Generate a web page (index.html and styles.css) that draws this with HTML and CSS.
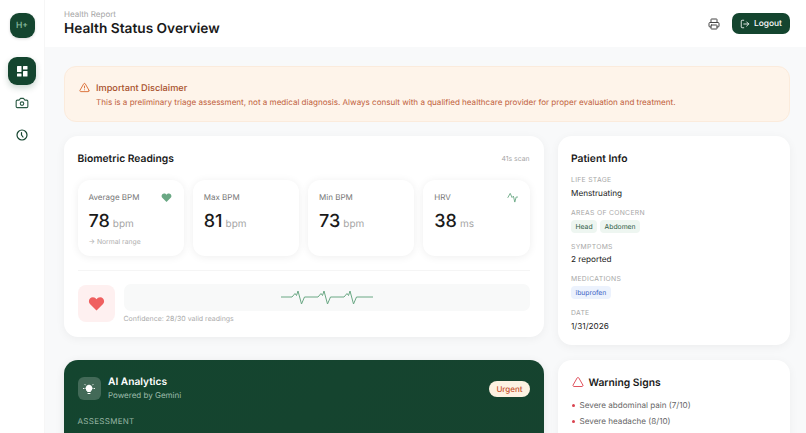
FILE: index.html
```html
<!DOCTYPE html>
<html lang="en">
<head>
<meta charset="utf-8">
<title>Health Status Overview</title>
<link rel="stylesheet" href="styles.css">
</head>
<body>
<div class="app">
  <aside class="sidebar">
    <div class="logo">H+</div>
    <nav class="nav">
      <a class="nav-item active">
        <svg width="12" height="12" viewBox="0 0 24 24" fill="#fff"><rect x="2" y="2" width="9" height="12" rx="1"/><rect x="14" y="2" width="9" height="7" rx="1"/><rect x="14" y="12" width="9" height="11" rx="1"/><rect x="2" y="17" width="9" height="6" rx="1"/></svg>
      </a>
      <a class="nav-item">
        <svg width="14" height="14" viewBox="0 0 24 24" fill="none" stroke="#2a5a44" stroke-width="1.900" stroke-linecap="round" stroke-linejoin="round"><path d="M14.500 4h-5L7 7H4a2 2 0 0 0-2 2v9a2 2 0 0 0 2 2h16a2 2 0 0 0 2-2V9a2 2 0 0 0-2-2h-3z"/><circle cx="12" cy="13" r="3"/></svg>
      </a>
      <a class="nav-item">
        <svg width="12" height="12" viewBox="0 0 24 24" fill="none" stroke="#14452f" stroke-width="2.400" stroke-linecap="round" stroke-linejoin="round"><circle cx="12" cy="12" r="10"/><path d="M11 7v5l3 4"/></svg>
      </a>
    </nav>
  </aside>
  <div class="main">
    <header class="topbar">
      <div>
        <div class="crumb">Health Report</div>
        <h1 class="page-title">Health Status Overview</h1>
      </div>
      <div class="actions">
        <svg class="print" width="12" height="12" viewBox="0 0 24 24" fill="none" stroke="#444" stroke-width="2" stroke-linecap="round" stroke-linejoin="round"><path d="M6 9V3a1 1 0 0 1 1-1h10a1 1 0 0 1 1 1v6"/><path d="M6 18H4a2 2 0 0 1-2-2v-5a2 2 0 0 1 2-2h16a2 2 0 0 1 2 2v5a2 2 0 0 1-2 2h-2"/><rect x="6" y="14" width="12" height="8" rx="1"/></svg>
        <button class="logout">
          <svg width="10" height="10" viewBox="0 0 24 24" fill="none" stroke="#fff" stroke-width="2" stroke-linecap="round" stroke-linejoin="round"><path d="M9 21H5a2 2 0 0 1-2-2V5a2 2 0 0 1 2-2h4"/><path d="m16 17 5-5-5-5"/><path d="M21 12H9"/></svg>
          Logout
        </button>
      </div>
    </header>
    <main class="content">
      <section class="disclaimer">
        <svg class="disc-icon" width="11" height="11" viewBox="0 0 24 24" fill="none" stroke="#d9692f" stroke-width="2" stroke-linecap="round" stroke-linejoin="round"><path d="m21.700 18-8-14a2 2 0 0 0-3.500 0l-8 14A2 2 0 0 0 4 21h16a2 2 0 0 0 1.700-3"/><path d="M12 9v4"/><path d="M12 17h.01"/></svg>
        <div>
          <div class="disc-title">Important Disclaimer</div>
          <div class="disc-text">This is a preliminary triage assessment, not a medical diagnosis. Always consult with a qualified healthcare provider for proper evaluation and treatment.</div>
        </div>
      </section>
      <div class="grid">
        <div class="col col-left">
          <section class="card bio">
            <div class="bio-head">
              <h2 class="card-title">Biometric Readings</h2>
              <span class="scan">41s scan</span>
            </div>
            <div class="metrics">
              <div class="metric">
                <div class="metric-head"><span>Average BPM</span>
                  <svg class="metric-icon" width="11" height="11" viewBox="0 0 24 24" fill="#6aa884"><path d="M12 22 2.800 12.600C-.5 9 1.800 3 7 3c2.200 0 3.800 1 5 3 1.200-2 2.800-3 5-3 5.200 0 7.500 6 4.200 9.600z"/></svg>
                </div>
                <div class="value">78<span class="unit">bpm</span></div>
                <div class="note">→ Normal range</div>
              </div>
              <div class="metric">
                <div class="metric-head"><span>Max BPM</span></div>
                <div class="value">81<span class="unit">bpm</span></div>
              </div>
              <div class="metric">
                <div class="metric-head"><span>Min BPM</span></div>
                <div class="value">73<span class="unit">bpm</span></div>
              </div>
              <div class="metric">
                <div class="metric-head"><span>HRV</span>
                  <svg class="metric-icon" width="11" height="11" viewBox="0 0 24 24" fill="none" stroke="#6aa884" stroke-width="2" stroke-linecap="round" stroke-linejoin="round"><path d="M2 12 7 3l4 9 3-3 3 13 3-11h3"/></svg>
                </div>
                <div class="value">38<span class="unit">ms</span></div>
              </div>
            </div>
            <div class="divider"></div>
            <div class="wave-row">
              <div class="heart-box">
                <svg width="17" height="17" viewBox="0 0 24 24" fill="#ef5f5f"><path d="M12 22 2.800 12.600C-.5 9 1.800 3 7 3c2.200 0 3.800 1 5 3 1.200-2 2.800-3 5-3 5.200 0 7.500 6 4.200 9.600z"/></svg>
              </div>
              <div class="wave-col">
                <div class="wave">
                  <svg width="94" height="15" viewBox="0 0 94 15" fill="none" stroke="#6aa884" stroke-width="1" stroke-linejoin="round"><path d="M1 7h11l3-3.500 1.500 2L18 1l3.500 13L24.500 7H38l3-3.500 1.500 2L44 1l3.500 13L50.500 7H64l3-3.500 1.500 2L70 1l3.500 13L76.500 7H93"/></svg>
                </div>
                <div class="confidence">Confidence: 28/30 valid readings</div>
              </div>
            </div>
          </section>
          <section class="ai">
            <div class="ai-head">
              <div class="ai-brand">
                <div class="ai-icon">
                  <svg width="12" height="12" viewBox="0 0 24 24" fill="none" stroke="#fff" stroke-width="2" stroke-linecap="round" stroke-linejoin="round"><path d="M10 21h4"/><path d="M8 15a6 6 0 1 1 8 0c-.8.700-1 1.500-1 2H9c0-.5-.2-1.300-1-2z" fill="#fff"/><path d="M1 11h1M22 11h1M4 3l1 1M20 3l-1 1"/></svg>
                </div>
                <div>
                  <div class="ai-title">AI Analytics</div>
                  <div class="ai-sub">Powered by Gemini</div>
                </div>
              </div>
              <span class="urgent">Urgent</span>
            </div>
            <div class="ai-label">ASSESSMENT</div>
          </section>
        </div>
        <div class="col col-right">
          <section class="card patient">
            <h2 class="card-title">Patient Info</h2>
            <div class="field-label first">LIFE STAGE</div>
            <div class="field-value">Menstruating</div>
            <div class="field-label">AREAS OF CONCERN</div>
            <div class="tags"><span class="tag green">Head</span><span class="tag green">Abdomen</span></div>
            <div class="field-label">SYMPTOMS</div>
            <div class="field-value">2 reported</div>
            <div class="field-label">MEDICATIONS</div>
            <div class="tags"><span class="tag blue">ibuprofen</span></div>
            <div class="field-label">DATE</div>
            <div class="field-value">1/31/2026</div>
          </section>
          <section class="card warning">
            <div class="warn-head">
              <svg width="12" height="12" viewBox="0 0 24 24" fill="none" stroke="#e0535f" stroke-width="2" stroke-linecap="round" stroke-linejoin="round"><path d="m21.700 18-8-14a2 2 0 0 0-3.500 0l-8 14A2 2 0 0 0 4 21h16a2 2 0 0 0 1.700-3"/></svg>
              <h2 class="card-title">Warning Signs</h2>
            </div>
            <ul class="warn-list">
              <li>Severe abdominal pain (7/10)</li>
              <li>Severe headache (8/10)</li>
            </ul>
          </section>
        </div>
      </div>
    </main>
  </div>
</div>
</body>
</html>
```
FILE: styles.css
```css
* { box-sizing: border-box; }
html, body { margin: 0; height: 100%; overflow: hidden; }
body { font-family: Inter, "Liberation Sans", sans-serif; color: #1a1a1a; background: #f8f9fa; text-rendering: geometricPrecision; }
h1, h2 { margin: 0; }
.app { display: flex; height: 433px; overflow: hidden; }

.sidebar { width: 45px; flex: none; background: #fff; display: flex; flex-direction: column; align-items: center; padding-top: 13px; border-right: 1px solid #f6f6f6; }
.logo { width: 25px; height: 25px; border-radius: 9px; background: #14452f; color: #8cc0a3; font-size: 8.500px; font-weight: 500; display: flex; align-items: center; justify-content: center; box-shadow: 0 1px 3px rgba(0,0,0,.15); }
.nav { margin-top: 19px; display: flex; flex-direction: column; align-items: center; gap: 4px; }
.nav-item { width: 28px; height: 28px; border-radius: 9px; display: flex; align-items: center; justify-content: center; }
.nav-item.active { background: #14452f; box-shadow: 0 3px 6px rgba(20,69,47,.22); }

.main { flex: 1; min-width: 0; display: flex; flex-direction: column; }
.topbar { height: 47px; flex: none; background: #fff; display: flex; justify-content: space-between; align-items: center; padding: 0 16px 0 19px; }
.crumb { font-size: 8px; line-height: 10px; color: #a5a5a5; }
.page-title { font-size: 13.700px; font-weight: 600; line-height: 18px; margin-top: 1px; }
.actions { display: flex; align-items: center; gap: 12px; }
.print { display: block; }
.logout { height: 21px; width: 58px; padding: 0; border: 0; border-radius: 7px; background: #14452f; color: #fff; font: 500 8.400px Inter, "Liberation Sans", sans-serif; text-rendering: geometricPrecision; display: flex; align-items: center; justify-content: center; gap: 4px; }

.content { flex: 1; padding: 19px 16px 0 18.500px; overflow: hidden; }
.disclaimer { height: 56px; background: #fef4ea; border: 1px solid #fbebdc; border-radius: 12px; display: flex; gap: 6px; padding: 15px 13px 0 14.500px; margin-bottom: 14px; }
.disc-icon { flex: none; margin-top: 0; }
.disc-title { font-size: 9.200px; font-weight: 500; line-height: 13px; color: #a8512c; }
.disc-text { font-size: 8.060px; line-height: 11px; margin-top: 2px; color: #c0603a; white-space: nowrap; }

.grid { display: grid; grid-template-columns: 480px 232.500px; gap: 14px; align-items: start; }
.col { display: flex; flex-direction: column; }
.col-left { gap: 23px; }
.col-right { gap: 15px; }
.card { background: #fff; border-radius: 14px; box-shadow: 0 2px 10px rgba(0,0,0,.05); padding: 14px; }
.card-title { font-size: 10.300px; font-weight: 600; line-height: 16px; padding-top: 1px; color: #1a1a1a; }

.bio { height: 201px; }
.bio-head { display: flex; justify-content: space-between; align-items: center; }
.scan { font-size: 6.800px; color: #a5a5a5; }
.metrics { display: grid; grid-template-columns: repeat(4, 1fr); gap: 9px; margin-top: 13px; }
.metric { height: 76px; background: #fff; border-radius: 12px; box-shadow: 0 1px 8px rgba(0,0,0,.07); padding: 11px 11px 0; }
.metric-head { display: flex; justify-content: space-between; align-items: center; font-size: 8px; line-height: 12px; color: #777; }
.metric-icon { margin-right: 1px; }
.value { font-size: 18px; font-weight: 500; line-height: 24px; margin-top: 7px; color: #1a1a1a; }
.unit { font-size: 10px; font-weight: 400; color: #a5a5a5; margin-left: 3px; }
.note { font-size: 6.800px; line-height: 9px; color: #b0b0b0; margin-top: 1px; }
.divider { height: 1px; background: #f5f5f5; margin-top: 14px; }
.wave-row { display: flex; gap: 9px; margin-top: 13px; }
.heart-box { width: 37px; height: 37px; flex: none; margin-top: 1px; border-radius: 8px; background: #fef0f0; display: flex; align-items: center; justify-content: center; }
.wave-col { flex: 1; min-width: 0; }
.wave { height: 27px; background: #f8f9f9; border-radius: 7px; display: flex; align-items: center; justify-content: center; }
.wave svg { display: block; }
.confidence { font-size: 7px; line-height: 10px; margin-top: 3px; color: #ababab; }

.ai { height: 120px; border-radius: 14px; background: linear-gradient(135deg, #14452f, #16432f); padding: 16px 14px; box-shadow: 0 2px 10px rgba(0,0,0,.08); }
.ai-head { display: flex; justify-content: space-between; align-items: center; }
.ai-brand { display: flex; align-items: center; gap: 7.500px; }
.ai-icon { width: 23px; height: 23px; border-radius: 6px; background: rgba(255,255,255,.2); display: flex; align-items: center; justify-content: center; }
.ai-title { font-size: 10.200px; font-weight: 600; line-height: 13px; color: #fff; }
.ai-sub { font-size: 8px; line-height: 11px; margin-top: 1px; color: #9dbcab; }
.urgent { background: #fdf2e2; color: #c5502c; font-size: 8px; font-weight: 500; line-height: 16px; padding: 0 7px; border-radius: 8px; }
.ai-label { font-size: 8px; line-height: 11px; letter-spacing: .3px; color: #94b3a2; margin-top: 14.500px; }

.patient { height: 209px; padding-left: 13.500px; }
.field-label { font-size: 6.800px; line-height: 9px; letter-spacing: .3px; color: #a8a8a8; margin-top: 9px; }
.field-label.first { margin-top: 8px; }
.field-value { font-size: 8.200px; line-height: 11px; margin-top: 3.500px; color: #222; }
.tags { display: flex; gap: 3px; margin-top: 3px; }
.tag { font-size: 6.800px; line-height: 13px; padding: 0 4.500px; border-radius: 4px; }
.tag.green { background: #eef6f1; color: #2f5b45; }
.tag.blue { background: #ecf2fd; color: #3d63c4; }

.warning { height: 100px; padding-left: 14.500px; padding-top: 13.500px; }
.warn-head { display: flex; align-items: center; gap: 4.500px; }
.warn-list { list-style: none; margin: 6px 0 0; padding: 0; }
.warn-list li { position: relative; font-size: 8.100px; line-height: 16px; padding-left: 7.500px; color: #666; }
.warn-list li::before { content: ""; position: absolute; left: 0; top: 7px; width: 3px; height: 3px; border-radius: 50%; background: #d9434f; }
```
